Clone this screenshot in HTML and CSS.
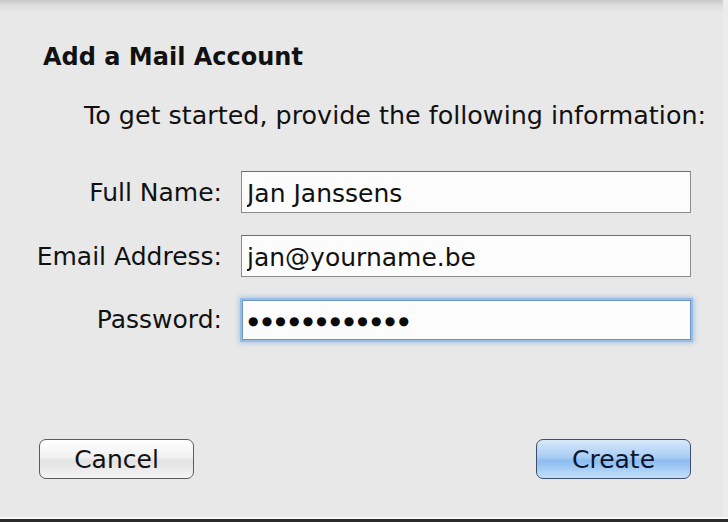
FILE: index.html
```html
<!DOCTYPE html>
<html lang="en">
<head>
    <meta charset="UTF-8">
    <title>Add a Mail Account</title>
    <link rel="stylesheet" href="styles.css">
</head>
<body>
    <div class="sheet">
        <h2 class="title">Add a Mail Account</h2>
        <p class="intro">To get started, provide the following information:</p>
        <form class="fields" autocomplete="off">
            <label class="label" for="fullName">Full Name:</label>
            <input class="field" type="text" id="fullName" value="Jan Janssens">
            <label class="label" for="email">Email Address:</label>
            <input class="field" type="text" id="email" value="jan@yourname.be">
            <label class="label" for="password">Password:</label>
            <div class="field focused"><span class="dots">&#9679;&#9679;&#9679;&#9679;&#9679;&#9679;&#9679;&#9679;&#9679;&#9679;&#9679;&#9679;</span></div>
        </form>
        <div class="buttons">
            <button type="button" class="btn">Cancel</button>
            <button type="button" class="btn default">Create</button>
        </div>
    </div>
</body>
</html>
```

FILE: styles.css
```css
html, body
{
    margin: 0;
    padding: 0;
    height: 100%;
}
body
{
    background: #e8e8e8;
    font-family: 'DejaVu Sans', 'Liberation Sans', sans-serif;
    color: #111;
    overflow: hidden;
}
.sheet
{
    box-sizing: border-box;
    height: 522px;
    background: linear-gradient(#c9c9c9 0, #dedede 6px, #e8e8e8 13px);
    border-bottom: 3px solid #2a2a2a;
    box-shadow: inset 0 -2px 0 #f6f6f6, inset -5px 0 0 #ececec;
    padding: 43px 0 0 0;
}
.title
{
    margin: 0 0 0 43px;
    font-size: 24px;
    font-weight: bold;
    line-height: 28px;
}
.intro
{
    margin: 29px 0 0 84px;
    font-size: 25.4px;
    line-height: 30px;
}
.fields
{
    display: grid;
    grid-template-columns: 222px 450px;
    column-gap: 19px;
    row-gap: 22px;
    align-items: center;
    margin-top: 41px;
}
.label
{
    text-align: right;
    font-size: 25px;
}
.field
{
    box-sizing: border-box;
    height: 42px;
    margin: 0;
    padding: 3px 0 0 5px;
    border: 1px solid #8c8c8c;
    border-top-color: #6e6e6e;
    background: #fcfcfc;
    font-family: inherit;
    font-size: 25px;
    color: #111;
    outline: none;
}
.focused
{
    height: 40px;
    margin: 1px 0 0 1px;
    padding: 2px 0 0 5px;
    border: 1px solid #6a95c4;
    box-shadow: 0 0 0 2px #9bbbe0, 0 0 5px 3px #a9c3e2;
    display: flex;
    align-items: center;
}
.dots
{
    font-size: 12px;
    letter-spacing: 3.2px;
    color: #0a0a0a;
}
.buttons
{
    display: flex;
    justify-content: space-between;
    margin: 99px 37px 0 39px;
}
.btn
{
    width: 155px;
    height: 40px;
    border: 1px solid #5c5c5c;
    border-radius: 7px;
    background: linear-gradient(#ffffff 0%, #f1f1f1 45%, #e2e2e2 55%, #f4f4f4 100%);
    font-family: inherit;
    font-size: 25px;
    color: #111;
    padding: 0;
}
.default
{
    border-color: #3e4f6e;
    background: linear-gradient(#d8e8fb 0%, #aacdf3 45%, #8cbcef 55%, #c4e0fb 100%);
    color: #0c1630;
}
```
